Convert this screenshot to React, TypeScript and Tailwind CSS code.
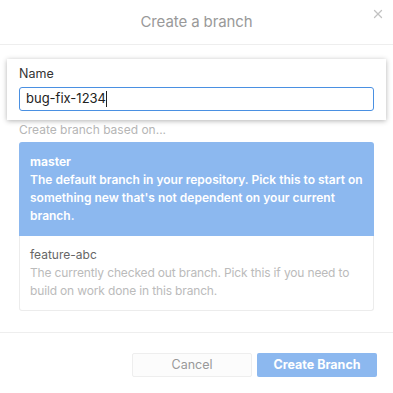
import { X } from "lucide-react";

const font = { fontFamily: "Inter, 'Noto Sans', sans-serif" };

const BranchOption = ({
  name,
  description,
  selected,
}: {
  name: string;
  description: string;
  selected?: boolean;
}) => (
  <div
    className={
      selected
        ? "bg-[#8cb8ef] px-[11px] pt-[11px] pb-[11px] rounded-t-[3px] text-white font-semibold"
        : "border border-t-0 border-[#ececec] px-[10px] pt-[10px] pb-[10px] rounded-b-[3px]"
    }
  >
    <div className={selected ? "text-[12px] leading-[18px] font-bold" : "text-[12px] leading-[18px] text-[#666]"}>
      {name}
    </div>
    <div
      className={
        selected
          ? "text-[12px] leading-[18px]"
          : "text-[12px] leading-[18px] tracking-[-0.15px] text-[#bbb]"
      }
    >
      {description}
    </div>
  </div>
);

export default function App() {
  return (
    <div className="w-[393px] h-[393px] bg-white relative overflow-hidden" style={font}>
      <div className="h-[45px] border-b border-[#eeeeee] flex items-center justify-center">
        <h1 className="text-[15px] text-[#999] tracking-[-0.1px] font-normal">Create a branch</h1>
      </div>
      <button className="absolute right-[8px] top-[7px] text-[#c2c2c2]">
        <X size={14} strokeWidth={2.2} />
      </button>

      <div className="px-[19px]">
        <div className="mx-[-12px] mt-[14px] bg-white shadow-[0_1px_5px_rgba(0,0,0,0.3)] px-[12px] pt-[6px] pb-[9px]">
          <label className="block text-[12.5px] text-[#333] leading-[18px] mb-[4px]">Name</label>
          <div className="h-[24px] border border-[#4a90e2] rounded-[3px] flex items-center px-[6px] text-[13px] text-[#222]">
            bug-fix-1234
            <span className="inline-block w-px h-[16px] bg-[#222]" />
          </div>
        </div>

        <p className="mt-[1px] text-[12px] leading-[18px] text-[#b5b5b5]">Create branch based on...</p>

        <div className="mt-[3px]">
          <BranchOption
            selected
            name="master"
            description="The default branch in your repository. Pick this to start on something new that's not dependent on your current branch."
          />
          <BranchOption
            name="feature-abc"
            description="The currently checked out branch. Pick this if you need to build on work done in this branch."
          />
        </div>
      </div>

      <div className="mt-[21px] border-t border-[#eeeeee] flex justify-end gap-[5px] px-[16px] pt-[20px]">
        <button className="w-[120px] h-[24px] border border-[#eeeeee] bg-[#fcfcfc] rounded-[2px] text-[12.5px] text-[#999]">
          Cancel
        </button>
        <button className="w-[120px] h-[24px] bg-[#8cb8ef] rounded-[2px] text-[12.5px] font-bold text-white">
          Create Branch
        </button>
      </div>
    </div>
  );
}
